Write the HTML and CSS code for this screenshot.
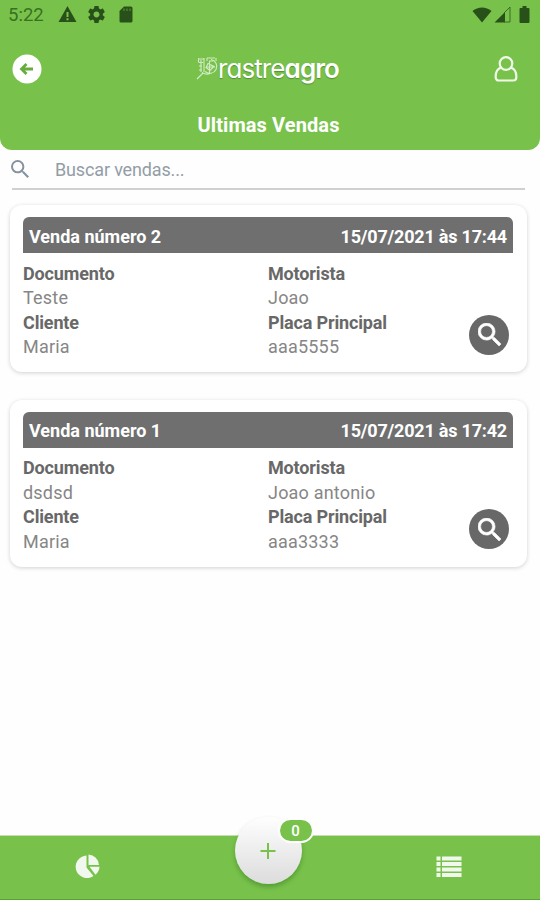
FILE: index.html
```
<!DOCTYPE html>
<html lang="pt-BR">
<head>
    <meta charset="UTF-8">
    <meta name="viewport" content="width=device-width, initial-scale=1.0">
    <title>Ultimas Vendas</title>
    <link rel="stylesheet" href="styles.css">
</head>
<body>
    <header class="header">
        <div class="status-bar">
            <span class="time">5:22</span>
            <svg class="status-warning" width="19" height="17" viewBox="0 0 19 17"><path fill-rule="evenodd" d="M9.500 0L18.500 16H0.500zM8.500 6v5h2V6zM8.500 12.200v2h2v-2z"/></svg>
            <svg class="status-gear" width="17" height="17" viewBox="2 2 20 20"><path d="M19.430 12.980c.04-.32.07-.64.07-.98s-.03-.66-.07-.98l2.110-1.650c.19-.15.24-.42.12-.64l-2-3.460c-.12-.22-.39-.3-.61-.22l-2.490 1c-.52-.4-1.080-.73-1.690-.98l-.38-2.650C14.460 2.180 14.250 2 14 2h-4c-.25 0-.46.18-.49.42l-.38 2.650c-.61.25-1.170.59-1.690.98l-2.490-1c-.23-.09-.49 0-.61.22l-2 3.460c-.13.22-.07.49.12.64l2.110 1.650c-.04.32-.07.65-.07.98s.03.66.07.98l-2.110 1.650c-.19.15-.24.42-.12.64l2 3.460c.12.22.39.3.61.22l2.490-1c.52.4 1.080.73 1.690.98l.38 2.650c.03.24.24.42.49.42h4c.25 0 .46-.18.49-.42l.38-2.650c.61-.25 1.170-.59 1.690-.98l2.490 1c.23.09.49 0 .61-.22l2-3.460c.12-.22.07-.49-.12-.64l-2.110-1.650zM12 15.500c-1.930 0-3.500-1.570-3.500-3.500s1.570-3.500 3.500-3.500 3.500 1.570 3.500 3.500-1.570 3.500-3.500 3.500z"/></svg>
            <svg width="14" height="17" viewBox="0 0 14 17"><path d="M5 0.500h7a1.500 1.500 0 0 1 1.500 1.500v13a1.500 1.500 0 0 1-1.500 1.500H2A1.500 1.500 0 0 1 0.500 15V5z"/><path class="sd-pins" d="M5 2.500v2.500M8 2.500v2.500M11 2.500v2.500"/></svg>
            <svg class="status-wifi" width="20" height="16" viewBox="0 0 20 16"><path d="M0.500 4C6-0.800 14-0.800 19.500 4L10 15.500z"/></svg>
            <svg class="status-signal" width="17" height="17" viewBox="0 0 17 17"><path d="M0.500 16.500L11 6V16.500z"/><path class="signal-line" d="M10 7l6-6v15h-6"/></svg>
            <svg width="11" height="17" viewBox="0 0 11 17"><path d="M3.500 0h4v2H9.500a1 1 0 0 1 1 1v13a1 1 0 0 1-1 1h-8a1 1 0 0 1-1-1V3a1 1 0 0 1 1-1h2z"/></svg>
        </div>
        <div class="top-bar">
            <svg class="back" width="30" height="30" viewBox="0 0 30 30"><circle cx="15" cy="15" r="14.500"/><path d="M21 15H10.500M14.500 10L9.500 15l5 5"/></svg>
            <div class="logo">
                <svg width="23" height="27" viewBox="0 0 23 27"><path d="M2 4h6M3 7.500h4M3 11h3M3 15h3M5 5v12M8 3v14M11 3v3M11 3h8M13 6h4M12 8.500l-2 4 4 3 4-4zM13.500 6v12M10 12h9M1 24l6-6"/><path d="M15 4.500a7 7 0 1 1-6 12M6 17.500c3 2 6 2 8 1M2.500 3.500v4M20 3v3"/></svg>
                <span class="logo-text">rastre<b>agro</b></span>
            </div>
            <svg class="user" width="24" height="26" viewBox="0 0 24 26"><circle cx="12" cy="7.500" r="6.300"/><path d="M7 11.500C3.500 13 1.700 16 1.700 20v1.500a3 3 0 0 0 3 3h14.600a3 3 0 0 0 3-3V20c0-4-1.800-7-5.300-8.500"/></svg>
        </div>
        <h1 class="title">Ultimas Vendas</h1>
    </header>

    <main class="content">
        <div class="search">
            <svg width="18" height="18" viewBox="3 3 17.500 17.500"><path d="M15.500 14h-.79l-.28-.27A6.471 6.471 0 0 0 16 9.500 6.500 6.500 0 1 0 9.500 16c1.610 0 3.090-.59 4.230-1.570l.27.28v.79l5 4.990L20.490 19l-4.990-5zm-6 0C7.010 14 5 11.990 5 9.500S7.010 5 9.500 5 14 7.010 14 9.500 11.990 14 9.500 14z"/></svg>
            <input type="text" placeholder="Buscar vendas...">
        </div>

        <section class="card">
            <div class="card-header"><span>Venda número 2</span><span class="date">15/07/2021 às 17:44</span></div>
            <div class="card-body">
                <dl>
                    <dt>Documento</dt>
                    <dd>Teste</dd>
                    <dt>Cliente</dt>
                    <dd>Maria</dd>
                </dl>
                <dl>
                    <dt>Motorista</dt>
                    <dd>Joao</dd>
                    <dt>Placa Principal</dt>
                    <dd>aaa5555</dd>
                </dl>
                <button class="details" aria-label="Detalhes">
                    <svg width="23" height="23" viewBox="3 3 17.500 17.500"><path d="M15.500 14h-.79l-.28-.27A6.471 6.471 0 0 0 16 9.500 6.500 6.500 0 1 0 9.500 16c1.610 0 3.090-.59 4.230-1.570l.27.28v.79l5 4.990L20.490 19l-4.990-5zm-6 0C7.010 14 5 11.990 5 9.500S7.010 5 9.500 5 14 7.010 14 9.500 11.990 14 9.500 14z"/></svg>
                </button>
            </div>
        </section>

        <section class="card">
            <div class="card-header"><span>Venda número 1</span><span class="date">15/07/2021 às 17:42</span></div>
            <div class="card-body">
                <dl>
                    <dt>Documento</dt>
                    <dd>dsdsd</dd>
                    <dt>Cliente</dt>
                    <dd>Maria</dd>
                </dl>
                <dl>
                    <dt>Motorista</dt>
                    <dd>Joao antonio</dd>
                    <dt>Placa Principal</dt>
                    <dd>aaa3333</dd>
                </dl>
                <button class="details" aria-label="Detalhes">
                    <svg width="23" height="23" viewBox="3 3 17.500 17.500"><path d="M15.500 14h-.79l-.28-.27A6.471 6.471 0 0 0 16 9.500 6.500 6.500 0 1 0 9.500 16c1.610 0 3.090-.59 4.230-1.570l.27.28v.79l5 4.990L20.490 19l-4.990-5zm-6 0C7.010 14 5 11.990 5 9.500S7.010 5 9.500 5 14 7.010 14 9.500 11.990 14 9.500 14z"/></svg>
                </button>
            </div>
        </section>
    </main>

    <nav class="tab-bar">
        <svg class="tab-chart" width="25" height="25" viewBox="0 0 25 25"><path d="M11.500 1.500v12l7 8.500A11.300 11.300 0 1 1 11.500 1.500z"/><path d="M13.500 0.500A11 11 0 0 1 24 11h-10.500z"/><path d="M14.500 12.800h10a11 11 0 0 1-4 8z"/></svg>
        <div class="add-wrap">
            <button class="add" aria-label="Adicionar">
                <svg width="16" height="18" viewBox="0 0 16 18"><path d="M8 1v16M0.500 9h15"/></svg>
            </button>
            <span class="badge">0</span>
        </div>
        <svg class="tab-list" width="26" height="22" viewBox="0 0 26 22"><path d="M0.500 0.500h4v4h-4zM6 0.500h19.500v4H6zM0.500 6h4v4h-4zM6 6h19.500v4H6zM0.500 11.500h4v4h-4zM6 11.500h19.500v4H6zM0.500 17h4v4h-4zM6 17h19.500v4H6z"/></svg>
    </nav>
</body>
</html>
```
FILE: styles.css
```
* {
    box-sizing: border-box;
}
body {
    font-family: Roboto, sans-serif;
    margin: 0;
    height: 900px;
    display: flex;
    flex-direction: column;
    background-color: #fefefe;
    overflow: hidden;
}
svg {
    display: block;
    flex: none;
}
.header {
    height: 150px;
    background-color: #78c24b;
    border-radius: 0 0 12px 12px;
}
.status-bar {
    height: 29px;
    padding: 0 10px 0 8px;
    display: flex;
    align-items: center;
    fill: #28511a;
}
.time {
    width: 50px;
    font-size: 18.5px;
    color: #397022;
}
.status-gear {
    margin: 0 14px 0 11px;
}
.sd-pins {
    stroke: #5b9939;
    stroke-width: 1;
}
.status-wifi {
    margin-left: auto;
}
.status-signal {
    margin: 0 8px 0 2px;
}
.signal-line {
    fill: none;
    stroke: #3a6b25;
}
.top-bar {
    height: 79px;
    padding: 0 22px 0 12px;
    display: grid;
    grid-template-columns: 1fr auto 1fr;
    align-items: center;
}
.back circle {
    fill: #fff;
}
.back path {
    fill: none;
    stroke: #67ad3d;
    stroke-width: 2.8;
}
.logo {
    padding-left: 5px;
    display: flex;
    align-items: center;
    color: #fff;
}
.logo svg {
    fill: none;
    stroke: #d3ebc5;
    stroke-width: 1.1;
}
.logo-text {
    margin-left: -1px;
    font-family: Inter, sans-serif;
    font-feature-settings: "cv11";
    font-size: 26px;
    font-weight: 400;
    line-height: 30px;
    letter-spacing: -0.9px;
    text-shadow: 0 1px 1px rgba(50, 90, 30, 0.5);
}
.logo-text b {
    font-weight: 600;
}
.user {
    justify-self: end;
    fill: none;
    stroke: #f0faea;
    stroke-width: 2.2;
}
.title {
    margin: 5px 0 0;
    padding-right: 3px;
    font-size: 20px;
    line-height: 24px;
    letter-spacing: 0.1px;
    text-align: center;
    color: #fff;
}
.content {
    flex: 1;
    padding: 0 13px 0 10px;
}
.search {
    height: 40px;
    margin: 0 2px 15px;
    display: flex;
    align-items: center;
    border-bottom: 2px solid #d0d0d0;
}
.search svg {
    margin-left: -1px;
    fill: #86939e;
}
.search input {
    flex: 1;
    margin-left: 26px;
    padding: 0;
    border: none;
    outline: none;
    background: none;
    font-family: inherit;
    font-size: 18px;
    letter-spacing: -0.15px;
}
.search input::placeholder {
    color: #939da6;
}
.card {
    height: 167px;
    margin-bottom: 27.5px;
    padding: 12px 14px 0 13px;
    border-radius: 12px;
    background-color: #fff;
    box-shadow: 0 1px 4px rgba(0, 0, 0, 0.18);
}
.card-header {
    height: 36px;
    padding: 2px 6px 0;
    display: flex;
    justify-content: space-between;
    align-items: center;
    border-radius: 6px 6px 0 0;
    background-color: #6f6f6f;
    font-size: 18px;
    font-weight: bold;
    color: #fff;
}
.date {
    letter-spacing: -0.2px;
}
.card-body {
    padding-top: 8.5px;
    display: grid;
    grid-template-columns: 1fr 1fr;
    position: relative;
}
dl {
    margin: 0;
    font-size: 18px;
    line-height: 24.6px;
}
dt {
    font-weight: bold;
    letter-spacing: -0.15px;
    color: #686868;
}
dd {
    margin: 0;
    letter-spacing: 0.2px;
    color: #868686;
}
.details {
    position: absolute;
    right: 4px;
    top: 61.5px;
    width: 40px;
    height: 40px;
    padding: 0;
    display: flex;
    justify-content: center;
    align-items: center;
    border: none;
    border-radius: 50%;
    background-color: #686868;
    fill: #fff;
    stroke: #fff;
    stroke-width: 0.5;
}
.tab-bar {
    height: 65px;
    padding: 0 78px 2px 75px;
    display: flex;
    justify-content: space-between;
    align-items: center;
    border-top: 1px solid #c3dfb2;
    border-bottom: 1px solid #58a233;
    background-color: #78c24b;
    fill: #f1f8ed;
}
.add-wrap {
    margin-top: -32px;
    position: relative;
}
.add {
    width: 67px;
    height: 67px;
    padding: 0;
    display: flex;
    justify-content: center;
    align-items: center;
    border: none;
    border-radius: 50%;
    background: linear-gradient(#fefefe, #dcdcdc);
    box-shadow: 0 3px 5px rgba(0, 70, 0, 0.3);
    stroke: #78c24b;
    stroke-width: 2;
}
.badge {
    position: absolute;
    left: 43px;
    top: 1px;
    width: 36px;
    height: 25px;
    border: 2px solid #fff;
    border-radius: 13px;
    background-color: #78c24b;
    font-size: 15px;
    font-weight: 500;
    line-height: 22px;
    text-align: center;
    color: #fff;
}
```
